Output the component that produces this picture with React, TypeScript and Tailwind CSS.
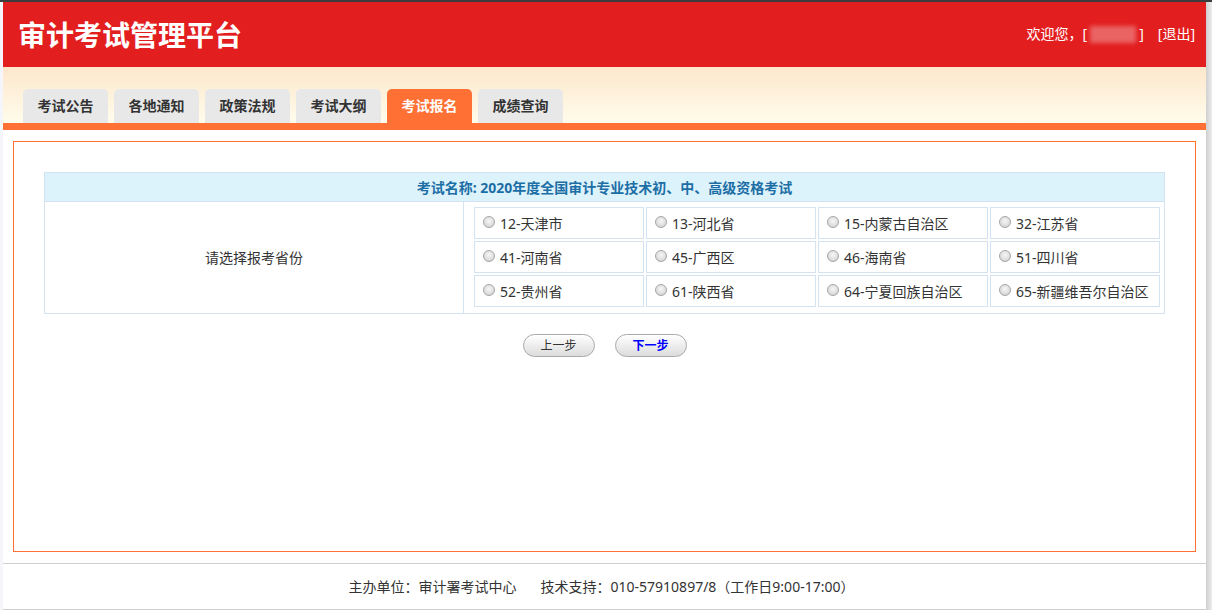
import React from "react";

const font = { fontFamily: '"Noto Sans", "Noto Sans CJK SC", sans-serif' };

const tabs = ["考试公告", "各地通知", "政策法规", "考试大纲", "考试报名", "成绩查询"];
const provinces = [
  "12-天津市",
  "13-河北省",
  "15-内蒙古自治区",
  "32-江苏省",
  "41-河南省",
  "45-广西区",
  "46-海南省",
  "51-四川省",
  "52-贵州省",
  "61-陕西省",
  "64-宁夏回族自治区",
  "65-新疆维吾尔自治区",
];

function Radio() {
  return (
    <span className="inline-block w-[12px] h-[12px] rounded-full border border-[#a6a6a6] bg-[radial-gradient(circle_at_50%_40%,#f6f6f6_0%,#dedede_60%,#c4c4c4_100%)] shrink-0 -mt-[3px]" />
  );
}

export default function App() {
  return (
    <div className="w-[1212px] h-[610px] overflow-hidden bg-white flex flex-col text-[#333]" style={font}>
      <div className="h-[2px] bg-[#3c3c3c] shrink-0" />
      <div className="flex flex-1 min-h-0">
        <div className="w-[3px] bg-[#f5f6fb] shrink-0" />
        <div className="w-[1203px] flex flex-col shrink-0">
          {/* header */}
          <div className="h-[65px] bg-[#e31e1f] flex items-center justify-between pl-[15px] pr-[11px] shrink-0">
            <div className="text-white font-bold text-[28px] leading-none">审计考试管理平台</div>
            <div className="flex items-center text-white text-[14px] leading-none -mt-[1px]">
              <span>欢迎您，[</span>
              <span className="inline-block w-[46px] h-[17px] bg-[#ea6464] blur-[2px] mx-[3px]" />
              <span>]</span>
              <span className="ml-[14px]">[退出]</span>
            </div>
          </div>
          {/* tab band */}
          <div className="h-[56px] bg-gradient-to-b from-[#fde7cc] to-[#fffcec] flex items-end pl-[20px] gap-[6px] shrink-0">
            {tabs.map((t) => (
              <div
                key={t}
                className={
                  t === "考试报名"
                    ? "w-[85px] h-[34px] rounded-t-[5px] bg-[#fe7033] text-white font-bold text-[14px] flex items-center justify-center pb-[2px]"
                    : "w-[85px] h-[34px] rounded-t-[5px] bg-[#e8e8e8] text-[#333] font-bold text-[14px] flex items-center justify-center pb-[2px]"
                }
              >
                {t}
              </div>
            ))}
          </div>
          <div className="h-[7px] bg-[#fe7033] shrink-0" />
          {/* content */}
          <div className="h-[433px] pt-[11px] px-[10px] pb-[11px] shrink-0">
            <div className="h-[411px] border border-solid border-[#fe7033] bg-white p-[30px]">
              <div className="border border-[#d3e3f1]">
                <div className="h-[29px] bg-[#ddf3fc] border-b border-[#d3e3f1] flex items-center justify-center text-[14px] font-bold text-[#1c6ea5]">
                  考试名称: 2020年度全国审计专业技术初、中、高级资格考试
                </div>
                <div className="flex">
                  <div className="w-[419px] border-r border-[#d3e3f1] flex items-center justify-center text-[14px] text-[#333]">
                    请选择报考省份
                  </div>
                  <div className="flex-1 pl-[10px] pt-[5px] pb-[6px]">
                    <div className="grid grid-cols-[repeat(4,170px)] gap-[2px]">
                      {provinces.map((p) => (
                        <div key={p} className="h-[32px] border border-[#d3e3f1] flex items-center pl-[8px] gap-[5px] text-[14px] text-[#333]">
                          <Radio />
                          <span>{p}</span>
                        </div>
                      ))}
                    </div>
                  </div>
                </div>
              </div>
              <div className="flex justify-center gap-[20px] mt-[20px]">
                <button className="w-[72px] h-[23px] rounded-full border border-[#aaaaaa] bg-gradient-to-b from-[#ffffff] to-[#dcdcdc] text-[12px] text-[#333] flex items-center justify-center">
                  上一步
                </button>
                <button className="w-[72px] h-[23px] rounded-full border border-[#aaaaaa] bg-gradient-to-b from-[#ffffff] to-[#dcdcdc] text-[12px] text-[#0000ff] font-semibold flex items-center justify-center">
                  下一步
                </button>
              </div>
            </div>
          </div>
          <div className="h-[1px] bg-[#d0d0d0] shrink-0" />
          <div className="h-[45px] flex items-center justify-center text-[14px] text-[#333] shrink-0 pr-[6px]">
            <span>主办单位：审计署考试中心</span>
            <span className="ml-[24px]">技术支持：010-57910897/8（工作日9:00-17:00）</span>
          </div>
          <div className="h-[1px] bg-[#d0d0d0] shrink-0" />
        </div>
        <div className="w-[6px] bg-gradient-to-r from-[#cfcfcf] to-[#ededed] shrink-0" />
      </div>
    </div>
  );
}
